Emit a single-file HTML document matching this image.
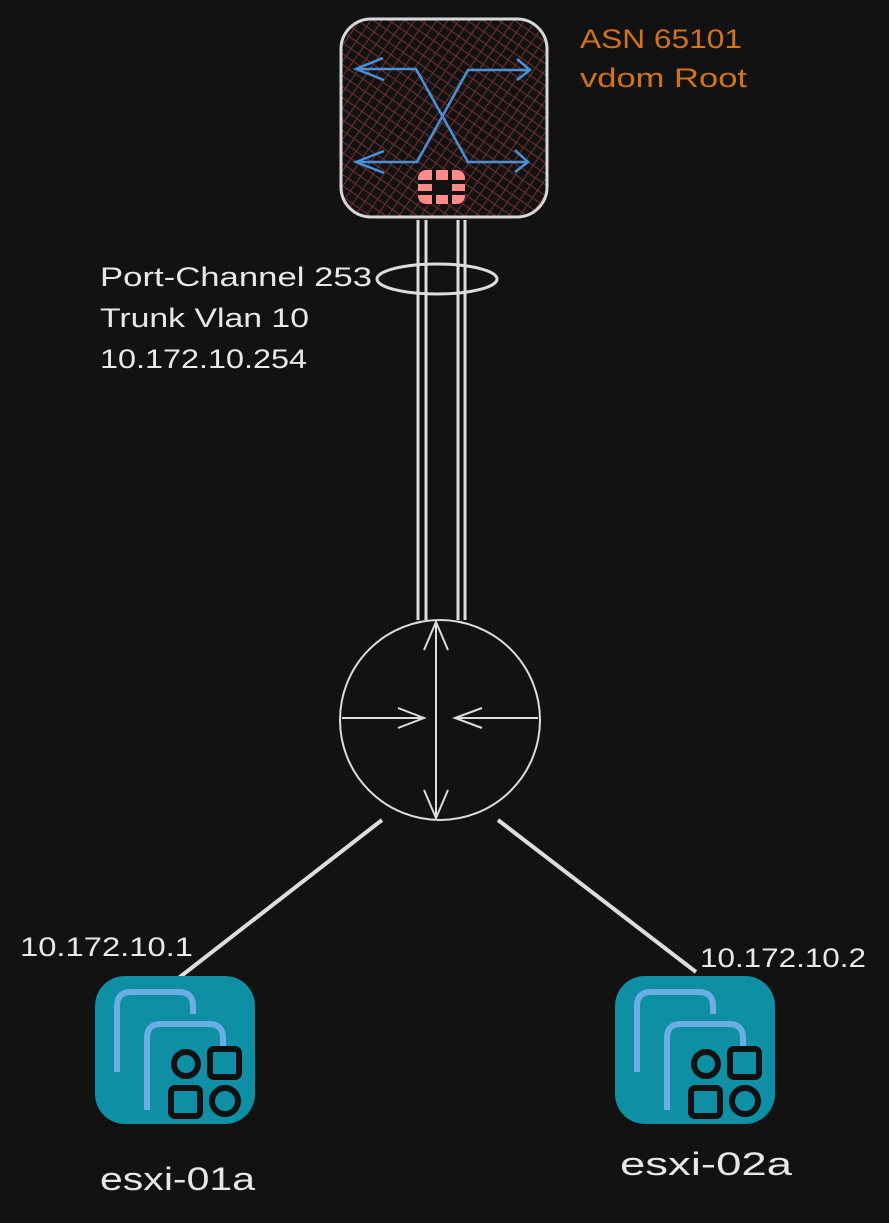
<!DOCTYPE html>
<html><head><style>
html,body{margin:0;padding:0;background:#121212;}
svg{display:block}
text{font-family:"Liberation Sans",sans-serif;}
</style></head><body>
<svg width="889" height="1223" viewBox="0 0 889 1223" xmlns="http://www.w3.org/2000/svg">
<defs>
<pattern id="hatch" width="9" height="9" patternUnits="userSpaceOnUse" patternTransform="rotate(35)">
<path d="M0 0H9M0 0V9" stroke="#6a2e2e" stroke-width="2.2"/>
</pattern>
<g id="esxi">
<rect x="0" y="0" width="160" height="148" rx="30" fill="#0e8fa3"/>
<path d="M22 96 V30 Q22 16 36 16 H84 Q98 16 98 30 V38" fill="none" stroke="#6aaee8" stroke-width="6"/>
<path d="M52 134 V62 Q52 48 66 48 H114 Q128 48 128 62 V70" fill="none" stroke="#6aaee8" stroke-width="6"/>
<circle cx="91" cy="88" r="12" fill="none" stroke="#111" stroke-width="6"/>
<rect x="115" y="73" width="29" height="28" rx="4" fill="none" stroke="#111" stroke-width="6"/>
<rect x="76" y="112" width="29" height="28" rx="4" fill="none" stroke="#111" stroke-width="6"/>
<circle cx="130" cy="125" r="13" fill="none" stroke="#111" stroke-width="6"/>
</g>
</defs>
<rect x="341" y="19" width="206" height="198" rx="30" fill="url(#hatch)" stroke="#d8d8d8" stroke-width="3"/>
<g stroke="#4a90d9" stroke-width="2.5" fill="none">
<path d="M356 69H416L468 162H528M515 150L528 162L515 172"/>
<path d="M356 162H417L468 70H530M517 59L530 70L517 80"/>
<path d="M383 58L356 69L384 80M384 151L356 162L384 173"/>
</g>
<rect x="418" y="170" width="47" height="34" rx="8" fill="#ff8a8a"/>
<g stroke="#121212" stroke-width="4"><path d="M434 170V204M450 170V204M418 182H465M418 193H465"/></g>
<rect x="432" y="181" width="20" height="13" fill="#121212"/>
<g stroke="#ddd" stroke-width="3"><path d="M418 220V620M426 220V620M458 220V620M465 220V620"/></g>
<ellipse cx="437" cy="279" rx="60" ry="15" fill="none" stroke="#ddd" stroke-width="3"/>
<circle cx="440" cy="720" r="100" fill="#121212" stroke="#ddd" stroke-width="2"/>
<g stroke="#ddd" stroke-width="2" fill="none">
<path d="M436 622V818M424 650L436 622L448 650M424 790L436 818L448 790"/>
<path d="M342 718H424M398 708L424 718L398 728M538 718H455M482 708L455 718L482 728"/>
</g>
<g stroke="#ddd" stroke-width="4"><path d="M382 820L176 980M498 820L696 972"/></g>
<use href="#esxi" x="95" y="976"/>
<use href="#esxi" x="615" y="976"/>
<g fill="#e8e8e8" font-size="27" lengthAdjust="spacingAndGlyphs">
<text x="100" y="286" textLength="272" lengthAdjust="spacingAndGlyphs">Port-Channel 253</text>
<text x="100" y="327" textLength="209" lengthAdjust="spacingAndGlyphs">Trunk Vlan 10</text>
<text x="100" y="368" textLength="207" lengthAdjust="spacingAndGlyphs">10.172.10.254</text>
<text x="20" y="956" textLength="173" lengthAdjust="spacingAndGlyphs">10.172.10.1</text>
<text x="700" y="967" textLength="166" lengthAdjust="spacingAndGlyphs">10.172.10.2</text>
<text x="100" y="1190" font-size="32" textLength="155" lengthAdjust="spacingAndGlyphs">esxi-01a</text>
<text x="620" y="1175" font-size="32" textLength="172" lengthAdjust="spacingAndGlyphs">esxi-02a</text>
</g>
<g fill="#d0731a" font-size="27">
<text x="580" y="48" textLength="162" lengthAdjust="spacingAndGlyphs">ASN 65101</text>
<text x="580" y="87" textLength="167" lengthAdjust="spacingAndGlyphs">vdom Root</text>
</g>
</svg>
</body></html>
